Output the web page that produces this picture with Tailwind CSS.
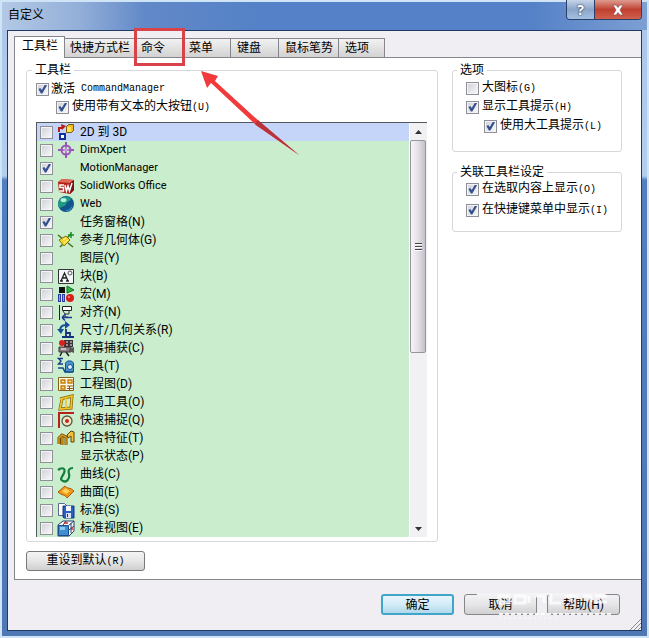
<!DOCTYPE html>
<html lang="zh-CN">
<head>
    <meta charset="UTF-8">
    <meta name="viewport" content="width=device-width, initial-scale=1.0">
    <title>自定义</title>
    <script src="https://cdn.jsdelivr.net/npm/@tailwindcss/browser@4"></script>
</head>
<body class="min-h-screen bg-[#cfe4f6] p-[2px] font-['Noto_Sans','Noto_Sans_CJK_SC',sans-serif] text-xs leading-4 text-black">

    <!-- Icon shapes for the toolbar list -->
    <svg class="hidden">
        <symbol id="i-2d3d" viewBox="0 0 18 18">
            <path d="M2 9V5h3" fill="none" stroke="#b81c14" stroke-width="2"/><path d="M4 1l5 2-4 4z" fill="#b81c14"/>
            <path d="M9.500 3.500l2-2h5v6l-2 2h-5z" fill="#f5b91c" stroke="#7a5a10"/><path d="M10 4h4v5h-4z" fill="#ffe14d"/>
            <path d="M3 11h5v5H3z" fill="#fff" stroke="#12309c" stroke-width="2"/>
        </symbol>
        <symbol id="i-dim" viewBox="0 0 18 18">
            <circle cx="9" cy="9" r="4.500" fill="none" stroke="#9a55b8" stroke-width="2"/>
            <path d="M9 1v16M1 9h16" stroke="#9a55b8" stroke-width="2"/><path d="M9 6v6M6 9h6" stroke="#d7b5e4"/>
        </symbol>
        <symbol id="i-sw" viewBox="0 0 18 18">
            <path d="M1 5l4-3 12 1v10l-4 4L2 15z" fill="#b41f1a"/><path d="M1 5l4-3 12 1-4 3z" fill="#e06a58"/><path d="M13 6l4-3v10l-4 4z" fill="#7f0f10"/>
            <path d="M7 8H3v2.500h3.500V14H2M8 8l1.500 6L11 9l1.500 5L15 6" fill="none" stroke="#fff" stroke-width="1.500"/>
        </symbol>
        <symbol id="i-web" viewBox="0 0 18 18">
            <circle cx="9" cy="9" r="8" fill="#12558a"/><path d="M3 5c3-4 9-4 11-1-1 3-4 2-5 5s-4 2-6 4C0 10 1 7 3 5z" fill="#209a80"/>
            <ellipse cx="6.500" cy="5" rx="3" ry="2" fill="#b9f0d8"/><path d="M9 15c3 0 6-2 6-5 1 3-2 6-6 6z" fill="#3d9cd8"/>
        </symbol>
        <symbol id="i-ref" viewBox="0 0 18 18">
            <path d="M1 4l5 4M11 12l5 4M3 16l4-4" stroke="#48701c" stroke-width="1.500"/><path d="M10 7l4-4" stroke="#207a20" stroke-width="1.500"/>
            <path d="M2 9l7-4 4 4-6 6z" fill="#f2d62c" stroke="#8a7410"/><path d="M6 9l3-2M7 12l4-3" stroke="#fff6a0"/>
            <path d="M14 1v6M11 4h6" stroke="#1c8a28" stroke-width="1.500"/>
        </symbol>
        <symbol id="i-block" viewBox="0 0 18 18">
            <path d="M1.500 2.500h15v14h-15z" fill="#f5f5fa" stroke="#333"/>
            <path d="M4 14l3.500-8L11 14M5 11h5M3 14h3M9 14h3" fill="none" stroke="#222" stroke-width="1.300"/><circle cx="13" cy="6" r="2" fill="none" stroke="#555"/>
        </symbol>
        <symbol id="i-macro" viewBox="0 0 18 18">
            <path d="M2 2h6v6H2z" fill="#111"/><path d="M10 1l7 4-7 3z" fill="#2fb344" stroke="#13702a"/>
            <path d="M1 9h3v8H1zM5 9h3v8H5z" fill="#2c3da8"/><path d="M2.500 10v6M6.500 10v6" stroke="#8ea0f0"/>
            <circle cx="13" cy="13" r="4" fill="#d81f1c"/><circle cx="12" cy="12" r="1" fill="#ff8d80"/>
        </symbol>
        <symbol id="i-align" viewBox="0 0 18 18">
            <path d="M2.500 2v15" stroke="#222"/><path d="M5.500 3.500h9v4h-9z" fill="#fff" stroke="#222"/>
            <path d="M6 8l2 3v3h3M8 11h4V8" fill="none" stroke="#333"/><path d="M5 14.500h10M5 14.500l3-3M5 14.500l3 3" stroke="#1d3f98" stroke-width="1.500"/>
        </symbol>
        <symbol id="i-rel" viewBox="0 0 18 18">
            <path d="M3 10c0-4 2-6 6-6" fill="none" stroke="#15509c" stroke-width="2"/><path d="M8 0l5 4-5 4zM0 8h7l-3 5z" fill="#15509c"/>
            <path d="M9 8v9M9 12h4v5M5 16h12" fill="none" stroke="#15307c" stroke-width="1.800"/>
        </symbol>
        <symbol id="i-cap" viewBox="0 0 18 18">
            <path d="M7 1h9v7H7z" fill="#3a3538"/><path d="M9 3h2M13 3h2M9 6h2M13 6h2" stroke="#eee"/><circle cx="5" cy="4" r="3" fill="#d8201c"/>
            <path d="M2 8h12v5H2z" fill="#8c8084" stroke="#3a3034"/><path d="M12 10l5-2v6l-5-2z" fill="#555"/><path d="M4 10h5" stroke="#fff"/><path d="M5 13l-2 4M9 13l3 4" stroke="#222" stroke-width="1.500"/>
        </symbol>
        <symbol id="i-tool" viewBox="0 0 18 18">
            <path d="M6 1.500H1.500L4 4 1.500 7H6" fill="none" stroke="#173a90" stroke-width="1.400"/>
            <path d="M8.500 6l2-2h4l2 2v9h-8z" fill="#4b96cc" stroke="#154f8c"/><circle cx="13" cy="10" r="2.500" fill="#d5eefa" stroke="#154f8c"/><path d="M1 11h5l2 4h8" fill="none" stroke="#154f8c" stroke-width="1.600"/>
        </symbol>
        <symbol id="i-draw" viewBox="0 0 18 18">
            <path d="M1.500 2.500h15v13h-15z" fill="#fffbe8" stroke="#866018"/>
            <path d="M4 5h4v3H4zM11 5h4v3h-4zM4 11h4v3H4z" fill="#ffe27a" stroke="#c17a0c" stroke-width="1.300"/><path d="M10 11h6M10 13.500h6M12.500 11v4" stroke="#866018"/>
        </symbol>
        <symbol id="i-layout" viewBox="0 0 18 18">
            <path d="M3 6l12-3-1 12-11 1 2-10" fill="none" stroke="#8a6508" stroke-width="3"/><path d="M3 6l12-3-1 12-11 1 2-10M9 5v10" fill="none" stroke="#f2c52a" stroke-width="1.600"/>
        </symbol>
        <symbol id="i-snap" viewBox="0 0 18 18">
            <path d="M2 17V2h15" fill="none" stroke="#b8201c" stroke-width="2"/><circle cx="10" cy="10" r="5" fill="#efe9c8" stroke="#5b5540" stroke-width="1.300"/><circle cx="10" cy="10" r="2" fill="#c4241c"/>
        </symbol>
        <symbol id="i-fasten" viewBox="0 0 18 18">
            <path d="M2 15V9l3-3 4 2v8M5 8v8" fill="none" stroke="#6d4b06" stroke-width="3"/><path d="M2 15V9l3-3 4 2v8M5 8v8" fill="none" stroke="#e9a71c" stroke-width="1.300"/>
            <path d="M10 6l4-4 3 1v10h-3V7l-3 2z" fill="#f4c23a" stroke="#5c4206"/>
        </symbol>
        <symbol id="i-curve" viewBox="0 0 18 18">
            <path d="M1 5c4-3 8-2 6 3s-5 6-1 8 7-3 6-7 0-6 4-6" fill="none" stroke="#12803c" stroke-width="2.200"/>
        </symbol>
        <symbol id="i-surf" viewBox="0 0 18 18">
            <path d="M1 9l7-6c2 3 5 1 9 5l-7 7C8 11 5 13 1 9z" fill="#f09a18" stroke="#a85608"/><path d="M5 8l4-3c1 2 3 2 4 3l-4 3C8 9 6 10 5 8z" fill="#ffd25c"/>
        </symbol>
        <symbol id="i-std" viewBox="0 0 18 18">
            <path d="M1.500 2.500h6l3 3v9h-9z" fill="#fff" stroke="#5a6a94"/><path d="M6 5h11v12H7l-1-1z" fill="#2c5fc4" stroke="#163580"/><path d="M9 5h5v5H9z" fill="#f4f8ff"/><path d="M9 12h5v5H9z" fill="#dbe5f8"/><path d="M10 13h1v3h-1z" fill="#163580"/>
        </symbol>
        <symbol id="i-view" viewBox="0 0 18 18">
            <path d="M1 6l5-4h11v10l-5 5H1z" fill="#fff" stroke="#24406c"/><path d="M1.500 6.500h10v10h-10z" fill="#3f8ed0" stroke="#1c4c8c"/><path d="M3 8h5v3H3z" fill="#8fc8f0"/><path d="M12 6l5-4M12 11l5-4M9 2L6 6M14 4v10" stroke="#24406c"/><path d="M7 4h4M15 8v3" stroke="#c42a20" stroke-width="1.500"/>
        </symbol>
    </svg>

    <div class="relative flex min-h-[calc(100vh-4px)] flex-col bg-[linear-gradient(to_bottom,#a9c6ea_0px,#b2cfee_174px,#527fbe_178px,#4f77b4_100%)] px-[5px] pb-[5px]">

        <!-- Title bar -->
        <header class="-mx-[5px] flex h-7 items-start justify-between bg-[linear-gradient(to_right,#b3c9e5_0%,#93afd9_12%,#6289c8_22%,#5481c7_40%,#5481c7_82%,#7d9fd3_100%)] pr-[5px] pl-[6px]">
            <h1 class="pt-[5px]">自定义</h1>
            <div class="-mt-[2px] flex h-5 overflow-hidden rounded-b-[4px] border border-t-0 border-[#293e68]">
                <button type="button" aria-label="帮助" class="w-7 border-r border-[#293e68] bg-linear-to-b from-[#c5d4e8] via-[#8ba5ca] to-[#a4c1e1] pt-px text-center text-sm leading-4 font-bold text-white [text-shadow:0_0_2px_#25364e,0_0_1px_#25364e]">?</button>
                <button type="button" aria-label="关闭" class="flex w-[46px] items-center justify-center bg-linear-to-b from-[#dc9b90] via-[#c03f30] to-[#d0604c]">
                    <svg class="h-3 w-3" viewBox="0 0 12 12"><path d="M1 1h3l2 2.500L8 1h3L8 6l3 5H8L6 8.500 4 11H1l3-5z" fill="#fff" stroke="#7b4a50" stroke-width=".6"/></svg>
                </button>
            </div>
        </header>

        <main class="relative flex flex-1 flex-col border border-[#203a66] bg-[#f0eef3]">

            <!-- Tabs -->
            <div role="tablist" class="flex items-end pt-[5px] pl-[6px]">
                <button role="tab" aria-selected="true" class="relative z-10 -mb-px h-[22px] w-[51px] border border-b-0 border-[#85858c] bg-white pb-1 pl-[7px] text-left">工具栏</button>
                <button role="tab" class="h-[19px] w-[70px] border-t border-r border-[#85858c] bg-linear-to-b from-[#f2f2f2] to-[#d2d2d2] pl-[5px] text-left">快捷方式栏</button>
                <button role="tab" class="h-[19px] w-12 border-t border-r border-[#85858c] bg-linear-to-b from-[#f2f2f2] to-[#d2d2d2] pl-[6px] text-left">命令</button>
                <button role="tab" class="h-[19px] w-12 border-t border-r border-[#85858c] bg-linear-to-b from-[#f2f2f2] to-[#d2d2d2] pl-[6px] text-left">菜单</button>
                <button role="tab" class="h-[19px] w-12 border-t border-r border-[#85858c] bg-linear-to-b from-[#f2f2f2] to-[#d2d2d2] pl-[6px] text-left">键盘</button>
                <button role="tab" class="h-[19px] w-[60px] border-t border-r border-[#85858c] bg-linear-to-b from-[#f2f2f2] to-[#d2d2d2] pl-[6px] text-left">鼠标笔势</button>
                <button role="tab" class="h-[19px] w-[46px] border-t border-r border-[#85858c] bg-linear-to-b from-[#f2f2f2] to-[#d2d2d2] pl-[6px] text-left">选项</button>
            </div>

            <!-- Toolbars page -->
            <section class="ml-[6px] border border-r-0 border-[#85858c] bg-white pt-1 pr-[19px] pb-2 pl-[11px]">
                <div class="flex items-start gap-[14px]">
                    <fieldset class="min-w-0 flex-1 rounded-[3px] border border-[#d8d8dc] pt-[2px] pr-[10px] pb-1 pl-[9px]">
                        <legend class="-ml-1 px-[3px]">工具栏</legend>
                        <div class="flex flex-col">
                            <label class="flex h-[18px] items-center gap-[2px]"><input type="checkbox" checked data-box>激活 <span class="ml-1 font-['Liberation_Mono'] text-[10px]">CommandManager</span></label>
                            <label class="ml-5 flex h-[18px] items-center gap-[3px]"><input type="checkbox" checked data-box><span>使用带有文本的大按钮<span class="font-['Liberation_Mono'] text-[10px]">(U)</span></span></label>
                        </div>

                        <div class="mt-[6px] flex border-t border-l border-[#55585a]">
                            <ul id="toolbars" class="mr-px flex-1 bg-[#c9edcd] font-[Roboto,'Noto_Sans_CJK_SC',sans-serif]"></ul>
                            <div class="flex w-[17px] flex-col bg-[#f1f0f2]">
                                <button type="button" aria-label="向上滚动" class="flex h-[17px] items-center justify-center">
                                    <svg class="h-1 w-[7px]" viewBox="0 0 7 4"><path d="M0 4h7L3.500 0z" fill="#333"/></svg>
                                </button>
                                <div class="flex h-[213px] w-4 flex-col items-center justify-center gap-px rounded-[2px] border border-[#97949c] bg-linear-to-r from-[#f7f4f8] via-[#e4e0e7] to-[#c4c0c8]">
                                    <span class="h-[2px] w-[7px] border-t border-[#444] bg-white"></span>
                                    <span class="h-[2px] w-[7px] border-t border-[#444] bg-white"></span>
                                    <span class="h-[2px] w-[7px] border-t border-[#444] bg-white"></span>
                                </div>
                                <button type="button" aria-label="向下滚动" class="mt-auto flex h-[17px] items-center justify-center">
                                    <svg class="h-1 w-[7px]" viewBox="0 0 7 4"><path d="M0 0h7L3.500 4z" fill="#333"/></svg>
                                </button>
                            </div>
                        </div>
                    </fieldset>

                    <div class="flex w-[170px] flex-col gap-3">
                        <fieldset class="rounded-[3px] border border-[#d8d8dc] pt-px pb-4 pl-2">
                            <legend class="-ml-1 px-[3px]">选项</legend>
                            <div class="flex flex-col gap-px pl-[5px]">
                                <label class="flex h-[18px] items-center gap-[3px]"><input type="checkbox" data-box><span>大图标<span class="font-['Liberation_Mono'] text-[10px]">(G)</span></span></label>
                                <label class="flex h-[18px] items-center gap-[3px]"><input type="checkbox" checked data-box><span>显示工具提示<span class="font-['Liberation_Mono'] text-[10px]">(H)</span></span></label>
                                <label class="ml-[18px] flex h-[18px] items-center gap-[3px]"><input type="checkbox" checked data-box><span>使用大工具提示<span class="font-['Liberation_Mono'] text-[10px]">(L)</span></span></label>
                            </div>
                        </fieldset>
                        <fieldset class="rounded-[3px] border border-[#d8d8dc] pb-3 pl-2">
                            <legend class="-ml-1 px-[3px]">关联工具栏设定</legend>
                            <div class="flex flex-col gap-[3px] pl-[5px]">
                                <label class="flex h-[18px] items-center gap-[3px]"><input type="checkbox" checked data-box><span>在选取内容上显示<span class="font-['Liberation_Mono'] text-[10px]">(O)</span></span></label>
                                <label class="flex h-[18px] items-center gap-[3px]"><input type="checkbox" checked data-box><span>在快捷键菜单中显示<span class="font-['Liberation_Mono'] text-[10px]">(I)</span></span></label>
                            </div>
                        </fieldset>
                    </div>
                </div>

                <button type="button" class="mt-[9px] h-5 w-[119px] rounded-[3px] border border-[#77777c] bg-linear-to-b from-[#f4f4f4] via-[#e6e6e6] to-[#cfcfcf]">重设到默认<span class="font-['Liberation_Mono'] text-[10px]">(R)</span></button>
            </section>

            <!-- Dialog buttons -->
            <footer class="relative flex justify-end gap-[10px] pt-[14px] pr-[21px] pb-3">
                <button type="button" class="h-[21px] w-[73px] rounded-[3px] border-2 border-[#3fa6c9] bg-linear-to-b from-[#e8f5fb] via-[#d3ecf7] to-[#b0d9ec] leading-4">确定</button>
                <button type="button" class="h-[21px] w-[73px] rounded-[3px] border border-[#85858a] bg-linear-to-b from-[#f2f1f3] via-[#e6e5e7] to-[#d0cfd2]">取消</button>
                <button type="button" class="h-[21px] w-[73px] rounded-[3px] border border-[#85858a] bg-linear-to-b from-[#f2f1f3] via-[#e6e5e7] to-[#d0cfd2]">帮助<span class="font-[Roboto]">(H)</span></button>
                <!-- Faded mark across the buttons -->
                <svg class="pointer-events-none absolute top-3 right-7 h-7 w-[136px]" viewBox="0 0 136 28" fill="none" stroke="#fff">
                    <path d="M0 2h128" stroke="#f3f2f5" stroke-width="2"/>
                    <path d="M22 4h10v7H22zM38 4h10v7H38zM52 4v7M57 4h10v7M74 2v9h10M88 4h14M94 2v8M106 4h8v6M118 4h12M118 10h12" stroke-width="3" stroke-opacity=".75"/>
                    <path d="M22 22h116" stroke-width="2" stroke-dasharray="4 2" stroke-opacity=".85"/>
                    <path d="M22 26h60" stroke-dasharray="2 3" stroke-opacity=".7"/>
                </svg>
            </footer>
            <svg class="absolute right-0 bottom-0 h-3 w-3" viewBox="0 0 12 12"><path d="M1 12L12 1M5 12l7-7M9 12l3-3" stroke="#8b8b92"/></svg>
        </main>

        <!-- Callout on the commands tab -->
        <div class="pointer-events-none absolute top-[26px] left-[132px] h-[38px] w-[51px] border-[3px] border-[#d8434a]"></div>
        <svg class="pointer-events-none absolute top-[68px] left-[198px] h-[90px] w-[102px]" viewBox="0 0 102 90">
            <path d="M1 1l17 5-3 5 46 42 38 32-42-29L11 13l-4 5z" fill="#f03a3c"/><path d="M58 50l41 35-44-31z" fill="#b8323c"/>
        </svg>
    </div>

    <script>
        const toolbars = [
            ['2D 到 3D', 'i-2d3d', false],
            ['DimXpert', 'i-dim', false],
            ['MotionManager', '', true],
            ['SolidWorks Office', 'i-sw', false],
            ['Web', 'i-web', false],
            ['任务窗格(N)', '', true],
            ['参考几何体(G)', 'i-ref', false],
            ['图层(Y)', '', false],
            ['块(B)', 'i-block', false],
            ['宏(M)', 'i-macro', false],
            ['对齐(N)', 'i-align', false],
            ['尺寸/几何关系(R)', 'i-rel', false],
            ['屏幕捕获(C)', 'i-cap', false],
            ['工具(T)', 'i-tool', false],
            ['工程图(D)', 'i-draw', false],
            ['布局工具(O)', 'i-layout', false],
            ['快速捕捉(Q)', 'i-snap', false],
            ['扣合特征(T)', 'i-fasten', false],
            ['显示状态(P)', '', false],
            ['曲线(C)', 'i-curve', false],
            ['曲面(E)', 'i-surf', false],
            ['标准(S)', 'i-std', false],
            ['标准视图(E)', 'i-view', false],
        ];

        document.getElementById('toolbars').innerHTML = toolbars.map(([name, icon, on]) => `
            <li class="first:bg-[#c5d5fa]">
                <label class="flex h-[18px] items-center gap-1 pl-[3px]">
                    <input type="checkbox" data-box ${on ? 'checked' : ''}>
                    <svg class="size-[18px]">${icon ? `<use href="#${icon}"/>` : ''}</svg>
                    <span class="pl-px ${/^[\x00-\x7f]+$/.test(name) ? 'text-[11px]' : 'text-xs leading-4'}">${name}</span>
                </label>
            </li>`).join('');

        // Shared look for every tick box
        document.querySelectorAll('[data-box]').forEach(box => {
            box.className = "size-[13px] shrink-0 appearance-none border border-[#8e8f98] bg-linear-to-br from-[#cfd0d6] to-[#fafafa] p-px shadow-[inset_0_0_0_1px_#f4f4f4] checked:before:block checked:before:size-[9px] checked:before:bg-[#34508f] checked:before:content-[''] checked:before:[clip-path:polygon(5%_50%,25%_38%,42%_62%,78%_0%,100%_8%,48%_100%,32%_100%)]";
        });
    </script>
</body>
</html>
